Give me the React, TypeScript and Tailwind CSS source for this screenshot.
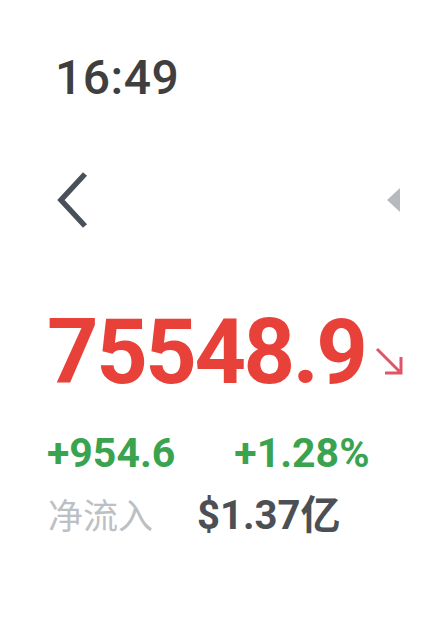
import React from "react";

export default function App() {
  return (
    <div className="w-[437px] h-[620px] bg-white overflow-hidden relative" style={{ fontFamily: "Roboto, 'Noto Sans CJK SC', sans-serif" }}>
      <div className="pt-[50px] pl-[55px] text-[48px] leading-[56px] font-medium text-[#3f3f3f] tracking-[0.5px]">16:49</div>
      <div className="mt-[66px] flex items-center justify-between pl-[56px] pr-[36px] h-[56px]">
        <svg width="32" height="56" viewBox="0 0 32 56">
          <path d="M29 2 L5 28 L29 54" fill="none" stroke="#4a5058" strokeWidth="5.5" strokeLinecap="butt" strokeLinejoin="miter" />
        </svg>
        <svg width="14" height="24" viewBox="0 0 14 24">
          <path d="M13 0 L13 24 L0 12 Z" fill="#b6babe" />
        </svg>
      </div>
      <div className="mt-[80px] pl-[47px] flex items-end">
        <span className="text-[90px] leading-[90px] font-bold text-[#e8413a] tracking-[-2.5px]">75548.9</span>
        <svg className="ml-[9px] mb-[22px]" width="30" height="30" viewBox="0 0 30 30">
          <path d="M3 3 L27 27 M27 11 L27 27 L11 27" fill="none" stroke="#e05468" strokeWidth="3" />
        </svg>
      </div>
      <div className="mt-[33px] pl-[47px] flex items-center text-[41px] leading-[44px] font-bold text-[#3aa34f]">
        <span>+954.6</span>
        <span className="ml-[59px]">+1.28%</span>
      </div>
      <div className="mt-[17px] pl-[48px] flex items-center h-[44px]">
        <span className="text-[35px] leading-[44px] text-[#bcc0c4]" style={{ fontFamily: "'Noto Sans CJK SC', sans-serif" }}>净流入</span>
        <span className="ml-[44px] text-[40px] leading-[44px] font-bold text-[#4c4f54]">$1.37<span style={{ fontFamily: "'Noto Sans CJK SC', sans-serif" }}>亿</span></span>
      </div>
    </div>
  );
}
